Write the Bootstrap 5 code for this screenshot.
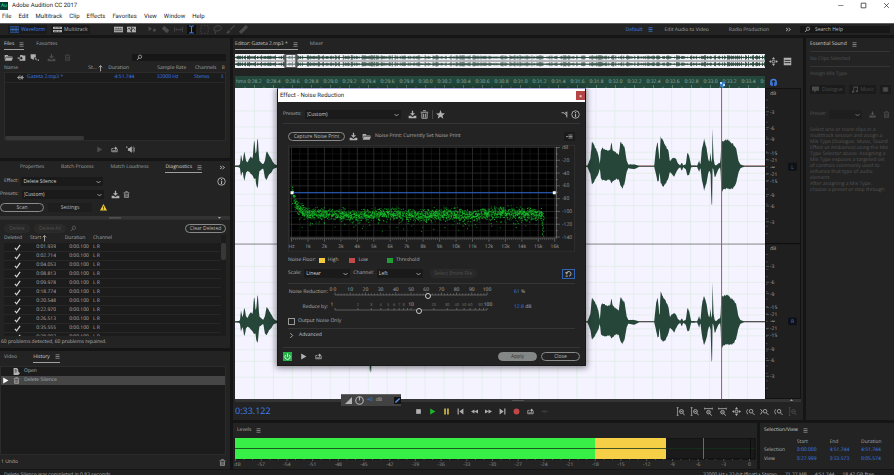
<!DOCTYPE html>
<html lang="en" data-bs-theme="dark">
<head>
<meta charset="utf-8">
<meta name="viewport" content="width=device-width, initial-scale=1">
<title>Adobe Audition CC 2017</title>
<link href="https://cdn.jsdelivr.net/npm/bootstrap@5.3.0/dist/css/bootstrap.min.css" rel="stylesheet">
<style>
:root{--panel:#232323;--gap:#151515;--list:#1c1c1c;--txt:#b2b2b2;--blue:#3a80ee}
html,body{height:100%}
body{background:var(--gap);color:var(--txt);font-family:"Open Sans","Noto Sans",sans-serif;font-size:5px;line-height:7px;text-rendering:geometricPrecision;overflow:hidden}
.app-shell{height:100vh}
svg{display:block;overflow:hidden}
.ic{width:9px;height:9px;flex:none;fill:currentColor}
.ic-s{width:7px;height:7px;flex:none;fill:currentColor}
.g2{gap:2px}.g3{gap:3px}.g5{gap:5px}.g7{gap:7px}
.tool{background:none;border:0;padding:0;color:#b0b0b0;line-height:7px;font-size:5px}
.tool.off{color:#4a4a4a}
.tool.hot{background:#0f0f0f;color:var(--blue)}
.tool.t-play{color:#1fb52f}.tool.t-pause{color:#c9b04a}.tool.t-rec{color:#c04848}
a.tab,a.menu-link{text-decoration:none;color:#a0a0a0;white-space:nowrap}
a.tab{padding-bottom:1px;margin-top:2px;border-bottom:1px solid transparent;line-height:8px}
a.tab.on{color:#d4d4d4;border-bottom:1px solid #a0a0a0}
a.tab.flat{padding:0;margin-top:0;border:0}
.burger{margin-left:5px;color:#9a9a9a;width:5px;height:5px;flex:none}
.blue{color:var(--blue)!important}
.lit{color:#d0d0d0}
.win-bar,.menu-bar,.dlg-title{font-family:Roboto,"Open Sans",sans-serif;font-size:6px}
.win-bar{background:#fff;color:#222;height:11px;line-height:11px}
.menu-bar{background:#fff;height:12px;line-height:12px;gap:7px;padding-left:2px}
a.menu-link{color:#222}
.logo-box{width:8px;height:8px;background:#0a3a31;color:#21e19a;font-size:5px;line-height:8px;text-align:center}
.win-bar button{background:none;border:0;padding:0;color:#333}
.work-bar{background:var(--panel);height:12px;border-top:1px solid #606060;margin-bottom:3px}
.ws-btn{background:#1b1b1b;height:9px;padding:0 2px}
.help-box,.find-box{background:#171717;border:0;color:#bbb;font-size:5px;line-height:7px;padding:0;min-width:0}
.help-wrap{width:90px}
.files-find{width:94px}
.help-box::placeholder{color:#bababa;opacity:1}
.main-row{min-height:0;gap:3px}
.pane{background:var(--panel);min-width:0;min-height:0;overflow:hidden}
.left-col{width:230px;flex:none;gap:3px}
.f-files{flex:121 1 0}.f-diag{flex:188 1 0}.f-hist{flex:119 1 0}
.file-tools{padding:3px 0 2px}
.well{background:var(--list);border:1px solid #2b2b2b;min-height:0;overflow:hidden}
.plain{width:100%;margin:0;border-collapse:collapse;table-layout:fixed;white-space:nowrap}
.plain th{font-weight:400;padding:0;color:#a8a8a8;height:8px;overflow:hidden}
.plain td{padding:0;height:9px;border-bottom:1px solid #272727;overflow:hidden}
.plain.bare td{border-bottom:0}
#diag thead{background:var(--panel)}
select.form-select{width:auto;min-height:0;border:0;border-radius:1px;background-color:#1a1a1a;color:#d0d0d0;font-size:5px;line-height:7px;padding:1px 10px 1px 2px;height:9px;background-size:5px 4px;background-position:right 2px center;
 background-image:url("data:image/svg+xml,%3Csvg xmlns='http://www.w3.org/2000/svg' viewBox='0 0 10 8'%3E%3Cpath d='M1 2l4 4 4-4' fill='none' stroke='%23aaa' stroke-width='1.8'/%3E%3C/svg%3E")}
select.form-select:disabled{background-color:#1c1c1c;opacity:.6}
select.w-a{width:82px}select.w-b{width:96px}select.w-c{width:46px}select.w-d{width:34px}
.pill{border:1px solid #8a8a8a;border-radius:5px;background:none;color:#b8b8b8;height:9px;line-height:7px;padding:0;font-size:5px;white-space:nowrap}
.pill.off{border-color:#2b2b2b;background:#292929;color:#505050}
.pill.flat{border-color:#1e1e1e;background:#1e1e1e;border-radius:1px}
.pill.fill{background:#838786;border-color:#838786;color:#333}
.b-26{width:26px}.b-32{width:32px}.b-39{width:39px}.b-41{width:41px}.b-44{width:44px}.b-47{width:47px}.b-57{width:57px}
.diag-tools{padding:4px 4px 2px}
.diag-note{padding:3px 1px 2px}
.scan-row{padding:4px 0}
.hist-row{height:9px;line-height:9px;gap:4px;padding-left:1px}
.hist-row.on{background:#464646}
.hist-tabs{margin-bottom:3px}
.foot-row{padding:4px 4px 3px 1px}
.editor{padding:0 2px}
.side-36{width:36px;flex:none}
.ov-row{margin-top:4px}
.rul-row{padding-top:8px}
.time-read{font-size:9px;line-height:12px;color:var(--blue)}
.trans{height:18px}
.wave-box{min-width:0;background:#f5f3ff}
.dbcol{width:36px;flex:none;background:#1f1f1f;border:1px solid #121212}
.es-col{width:88px;flex:none}
.es-dim{color:#555}
.es-line{padding:4px 0 3px}
.es-col hr,.dlg hr{margin:0;border-top:1px solid #353535;opacity:1}
.es-col hr.top{margin-top:2px}
.es-text{line-height:6px;white-space:nowrap}
.bottom{height:46px;flex:none;gap:3px}
.sel-pane{width:134px;flex:none}
.status{height:6px;flex:none;background:#1f1f1f;overflow:hidden;line-height:10px;white-space:nowrap;border-top:1px solid var(--gap)}
.dlg{position:absolute;left:277px;top:88px;width:309px;background:var(--panel);box-shadow:0 1px 6px 1px rgba(0,0,0,.45);border:1px solid #191919;border-top:1px solid #b4aee0;z-index:5}
.dlg-title{background:#fff;color:#222;height:13px;line-height:13px;padding-left:2px}
.dlg-x{background:#b44545;color:#fff;border:0;width:9px;height:9px;padding:0;font-size:5px;line-height:8px}
.dlg-body{padding:0 5px}
.inner{padding:0 5px}
.sw{width:6px;height:5px}
.legend-row{padding-top:5px}
.scale-row{padding:5px 0 4px}
.sl-row{padding-top:2px}
.rng{-webkit-appearance:none;appearance:none;background:none;width:100%;height:6px;margin:0;display:block}
.rng::-webkit-slider-thumb{-webkit-appearance:none;width:6px;height:6px;border-radius:50%;border:1px solid #ccc;background:var(--panel)}
.rng-wrap{width:158px;flex:none}
.rng-wrap svg{margin-bottom:-4px;overflow:visible}
.lab-r{width:40px;text-align:right;flex:none;white-space:nowrap}
.tick-row{padding:4px 0 3px}
.adv-row{padding:3px 0 4px}
.act-row{padding:4px 0}
.box-tick{-webkit-appearance:none;appearance:none;width:7px;height:7px;border:1px solid #999;background:none;margin:0}
.undo-btn{border:1px solid #2f63b5;width:13px;height:10px}
.hud{position:absolute;left:341px;top:394px;width:60px;height:12px;background:#424242;border-top:1px solid #666;z-index:6}
svg text{font-family:"Open Sans","Noto Sans",sans-serif}
</style>
<script src="https://cdn.jsdelivr.net/npm/bootstrap@5.3.0/dist/js/bootstrap.bundle.min.js"></script>
</head>
<body>
<svg width="0" height="0" class="position-absolute" aria-hidden="true">
 <symbol id="i-burger" viewBox="0 0 10 10"><path d="M1 1.500h8M1 5h8M1 8.500h8" stroke="currentColor" stroke-width="1.500"/></symbol>
 <symbol id="i-menu" viewBox="0 0 14 10"><path d="M5 2h8M5 5h8M5 8h8" stroke="currentColor" stroke-width="1.500"/><path d="M0 4h4L2 7z"/></symbol>
 <symbol id="i-wave" viewBox="0 0 16 12"><path d="M0 1h16v10H0z" fill="none" stroke="currentColor"/><path d="M0 6h16M3 4v4M5 2v8M7 4v4M9 3v6M11 1v10M13 4v4" stroke="currentColor"/></symbol>
 <symbol id="i-multi" viewBox="0 0 16 12"><path d="M0 1h16v4H0zM0 7h16v4H0z"/><path d="M3 3h3M8 3h5M2 9h5M9 9h3" stroke="#222"/></symbol>
 <symbol id="i-pair" viewBox="0 0 16 12"><path d="M0 1h16v10H0z"/><path d="M2 6V4m2 2V3m2 3V4m2 2V3m2 3V4m2 2V3m2 3V4M1 8h14" stroke="#222"/></symbol>
 <symbol id="i-pair2" viewBox="0 0 16 12"><path d="M0 1h16v10H0z"/><path d="M1 6l3-3 3 6 4-6 4 5M8 1v10" fill="none" stroke="#222" stroke-width="1.200"/></symbol>
 <symbol id="i-move" viewBox="0 0 14 12"><path d="M1 1l5 4-5 4zM10 4l3 3-3 3-3-3z"/></symbol>
 <symbol id="i-razor" viewBox="0 0 12 12"><path d="M4 1l7 6-3 4-7-6zM9 10l2 2"/></symbol>
 <symbol id="i-slip" viewBox="0 0 16 12"><path d="M1 1v10M15 1v10M3 6h10M5 4L3 6l2 2M11 4l2 2-2 2" fill="none" stroke="currentColor" stroke-width="1.3"/></symbol>
 <symbol id="i-ibeam" viewBox="0 0 10 12"><path d="M2 1l3 1 3-1M5 2v8M2 11l3-1 3 1" fill="none" stroke="currentColor" stroke-width="1.4"/></symbol>
 <symbol id="i-marq" viewBox="0 0 12 12"><path d="M1 1h10v10H1z" fill="none" stroke="currentColor" stroke-dasharray="2 2"/></symbol>
 <symbol id="i-lasso" viewBox="0 0 12 12"><path d="M3 8C-1 5 3 1 7 1s6 4 2 6-5 0-6 1 1 2 0 4" fill="none" stroke="currentColor" stroke-width="1.3"/></symbol>
 <symbol id="i-brush" viewBox="0 0 12 12"><path d="M11 0L5 6l1 1 6-6zM4 7c-2 0-2 3-4 4 3 1 6-1 5-3z"/></symbol>
 <symbol id="i-heal" viewBox="0 0 12 12"><path d="M9 1l2 2-8 8-2-2z" stroke="currentColor" stroke-width="1.5"/></symbol>
 <symbol id="i-folder" viewBox="0 0 14 12"><path d="M1 2h5l1 2h6v1H3L1 9zM3 6h11l-2 5H1z"/></symbol>
 <symbol id="i-import" viewBox="0 0 14 12"><path d="M5 2h3l1 1h4v8H4V8h2v2l3-3-3-3v2H1v2h3z"/></symbol>
 <symbol id="i-new" viewBox="0 0 14 12"><path d="M1 1h8v5H6v4L1 7zM7 7h3v4zM12 9h2v2h-2z"/></symbol>
 <symbol id="i-save" viewBox="0 0 14 12"><path d="M6 0h2v4h3L7 8 3 4h3zM1 8h3l3 2 3-2h3v4H1z"/></symbol>
 <symbol id="i-trash" viewBox="0 0 12 12"><path d="M4 1h4M1 3h10M2.500 4v7h7V4M4.800 5v5M7.200 5v5" fill="none" stroke="currentColor" stroke-width="1.2"/></symbol>
 <symbol id="i-find" viewBox="0 0 14 12"><circle cx="8" cy="4.500" r="3.300" fill="none" stroke="currentColor" stroke-width="1.4"/><path d="M5.500 7L2 11" stroke="currentColor" stroke-width="1.6"/></symbol>
 <symbol id="i-up" viewBox="0 0 10 12"><path d="M5 1v10M2 4l3-3 3 3" fill="none" stroke="currentColor" stroke-width="1.6"/></symbol>
 <symbol id="i-clip" viewBox="0 0 14 12"><path d="M0 6h14M3 3v6M6 1v10M9 3v6M11 2v8" stroke="currentColor" stroke-width="1.300"/></symbol>
 <symbol id="i-play" viewBox="0 0 12 12"><path d="M2 1l9 5-9 5z"/></symbol>
 <symbol id="i-loop" viewBox="0 0 14 12"><path d="M4 4H1.500v6.500h11V5M3 8.500h8M5 3.500h5" fill="none" stroke="currentColor" stroke-width="1.500"/><path d="M8 0l5 3.500L8 7z"/></symbol>
 <symbol id="i-speak" viewBox="0 0 14 12"><path d="M0 1l3 1-2 2zM3 4h2l4-3v10L5 8H3z"/><path d="M10.500 3q2 3 0 6M12 1.500q3 4.500 0 9" fill="none" stroke="currentColor"/></symbol>
 <symbol id="i-info" viewBox="0 0 12 12"><circle cx="6" cy="6" r="5" fill="none" stroke="currentColor" stroke-width="1.2"/><path d="M5.300 2.500h1.500V4H5.300zM5.300 5h1.500v4.500H5.300z"/></symbol>
 <symbol id="i-warn" viewBox="0 0 12 12"><path d="M6 0l6 11H0z" fill="#f0cc3a"/><path d="M6 4v4M6 9v1.200" stroke="#222" stroke-width="1.400"/></symbol>
 <symbol id="i-more" viewBox="0 0 14 12"><path d="M2 3l4 3-4 3M7 3l4 3-4 3" fill="none" stroke="currentColor" stroke-width="1.800"/></symbol>
 <symbol id="i-check" viewBox="0 0 12 12"><path d="M1.500 6.500L4.500 10 10.500 1.500" fill="none" stroke="#d8d8d8" stroke-width="2"/></symbol>
 <symbol id="i-doc" viewBox="0 0 12 12"><path d="M1 0h6l2 3v3l3 3-3 3H1z"/><path d="M3 3h3M3 5h4M3 7h3" stroke="#222"/></symbol>
 <symbol id="i-star" viewBox="0 0 12 12"><path d="M6 0l1.600 4.200L12 4.500 8.600 7.200 9.800 11.600 6 9.100 2.200 11.600 3.400 7.200 0 4.500l4.400-.3z"/></symbol>
 <symbol id="i-route" viewBox="0 0 12 12"><path d="M1 3h4l5 5M10 1v10M7 3h3" fill="none" stroke="currentColor" stroke-width="1.700"/></symbol>
 <symbol id="i-undo" viewBox="0 0 12 12"><path d="M1 10.500h4M7 10.500a4 4 0 1 0-4.500-5" fill="none" stroke="currentColor" stroke-width="1.700"/><path d="M0 4h5.500L3 8z"/></symbol>
 <symbol id="i-power" viewBox="0 0 12 12"><path d="M0 0h12v12H0z" fill="#27b14a"/><path d="M3.500 4a3.500 3.500 0 1 0 5 0M6 2v4.500" fill="none" stroke="#d8ffe0" stroke-width="1.200"/></symbol>
 <symbol id="i-stop" viewBox="0 0 12 12"><path d="M2 2h8v8H2z"/></symbol>
 <symbol id="i-pause" viewBox="0 0 12 12"><path d="M2 1h3v10H2zM7 1h3v10H7z"/></symbol>
 <symbol id="i-prev" viewBox="0 0 12 12"><path d="M1 1h2v10H1zM11 1v10L4 6z"/></symbol>
 <symbol id="i-rew" viewBox="0 0 14 12"><path d="M7 2v8L0 6zM14 2v8L7 6z"/></symbol>
 <symbol id="i-rec" viewBox="0 0 12 12"><circle cx="6" cy="6" r="5"/></symbol>
 <symbol id="i-skip" viewBox="0 0 14 12"><path d="M0 6h4M10 6h4" stroke="currentColor"/><path d="M7 2l4 4-4 4zM4 3l3 3-3 3z" opacity=".7"/></symbol>
 <symbol id="i-zamp" viewBox="0 0 14 14"><path d="M1 1h3M2.500 1v12M1 13h3" stroke="currentColor" stroke-width="1.200"/><circle cx="8.500" cy="7" r="3" fill="none" stroke="currentColor" stroke-width="1.400"/><path d="M10.500 9.500l3 3.500M7 7h3" stroke="currentColor" stroke-width="1.400"/></symbol>
 <symbol id="i-ztime" viewBox="0 0 14 14"><path d="M1 1v3M13 1v3M1 2.500h12" stroke="currentColor" stroke-width="1.200"/><circle cx="7" cy="8" r="2.800" fill="none" stroke="currentColor" stroke-width="1.400"/><path d="M9 10l3 3.500M5.500 8h3" stroke="currentColor" stroke-width="1.400"/></symbol>
 <symbol id="i-zfull" viewBox="0 0 14 14"><path d="M7 0l2.500 3.500h-5zM7 14l2.500-3.500h-5zM0 7l3.500-2.500v5zM14 7l-3.500-2.500v5z"/><circle cx="7" cy="7" r="2" fill="none" stroke="currentColor" stroke-width="1.500"/></symbol>
 <symbol id="i-zsel" viewBox="0 0 16 14"><path d="M3 3L1 7l2 5" fill="none" stroke="currentColor" stroke-width="1.400"/><circle cx="9" cy="6.500" r="3.200" fill="none" stroke="currentColor" stroke-width="1.500"/><path d="M11 9l4 4" stroke="currentColor" stroke-width="1.700"/></symbol>
 <symbol id="i-zsel2" viewBox="0 0 16 14"><path d="M1 3l3 4-3 5" fill="none" stroke="currentColor" stroke-width="1.600"/><circle cx="9" cy="6.500" r="3.200" fill="none" stroke="currentColor" stroke-width="1.500"/><path d="M11 9l4 4" stroke="currentColor" stroke-width="1.700"/></symbol>
 <symbol id="i-rack" viewBox="0 0 12 12"><path d="M1 1h10v10H1z"/><path d="M2 4.500h8M2 7.500h8" stroke="#222" stroke-width="1.200"/></symbol>
 <symbol id="i-head" viewBox="0 0 12 12"><path d="M2.500 9.500V5.500a3.500 3.500 0 0 1 7 0v4" fill="none" stroke="#3f7fe6" stroke-width="2"/><path d="M3 5.500h2v5H3zM7 5.500h2v5H7z" fill="#3f7fe6"/></symbol>
 <symbol id="i-bubble" viewBox="0 0 12 12"><path d="M0 1h12v7H7l-3 4V8H0z"/></symbol>
 <symbol id="i-music" viewBox="0 0 12 12"><path d="M4 1h8v8a2 2 0 1 1-1.500-2V3h-5v7a2 2 0 1 1-1.500-2z"/></symbol>
 <symbol id="i-sfx" viewBox="0 0 12 12"><path d="M2 2h8v8H2zM0 3h1v1H0zM0 6h1v1H0zM0 9h1v1H0zM11 3h1v1h-1zM11 6h1v1h-1zM11 9h1v1h-1z"/></symbol>
</svg>

<div class="app-shell d-flex flex-column">
 <header>
  <div class="win-bar d-flex align-items-center">
   <span class="logo-box me-1 ms-0">Au</span><span>Adobe Audition CC 2017</span>
   <div class="ms-auto d-flex gap-3 pe-1">
    <button aria-label="Minimize"><svg class="ic-s" viewBox="0 0 12 12"><path d="M2 6h9" stroke="#333"/></svg></button>
    <button aria-label="Maximize"><svg class="ic-s" viewBox="0 0 12 12"><path d="M2 2h8v8H2z" fill="none" stroke="#333" stroke-width="1.400"/></svg></button>
    <button aria-label="Close"><svg class="ic-s" viewBox="0 0 12 12"><path d="M2 2l8 8M10 2l-8 8" stroke="#333" stroke-width="1.300"/></svg></button>
   </div>
  </div>
  <nav class="menu-bar d-flex">
   <a class="menu-link" href="#">File</a><a class="menu-link" href="#">Edit</a><a class="menu-link" href="#">Multitrack</a><a class="menu-link" href="#">Clip</a><a class="menu-link" href="#">Effects</a><a class="menu-link" href="#">Favorites</a><a class="menu-link" href="#">View</a><a class="menu-link" href="#">Window</a><a class="menu-link" href="#">Help</a>
  </nav>
  <div class="work-bar d-flex align-items-center ps-1">
   <button class="tool ws-btn blue d-flex align-items-center g2 ms-1"><svg class="ic"><use href="#i-wave"/></svg>Waveform</button>
   <button class="tool ws-btn d-flex align-items-center g2 ms-1"><svg class="ic"><use href="#i-multi"/></svg>Multitrack</button>
   <div class="d-flex gap-1 ms-4">
    <button class="tool" aria-label="Show editor"><svg class="ic"><use href="#i-pair"/></svg></button>
    <button class="tool" aria-label="Show spectral view"><svg class="ic"><use href="#i-pair2"/></svg></button>
   </div>
   <div class="d-flex gap-1 ms-2 ps-1">
    <button class="tool off" aria-label="Move"><svg class="ic"><use href="#i-move"/></svg></button>
    <button class="tool off" aria-label="Razor"><svg class="ic"><use href="#i-razor"/></svg></button>
    <button class="tool off" aria-label="Slip"><svg class="ic"><use href="#i-slip"/></svg></button>
    <button class="tool hot" aria-label="Time selection"><svg class="ic"><use href="#i-ibeam"/></svg></button>
    <button class="tool off" aria-label="Marquee"><svg class="ic"><use href="#i-marq"/></svg></button>
    <button class="tool off" aria-label="Lasso"><svg class="ic"><use href="#i-lasso"/></svg></button>
    <button class="tool off" aria-label="Paintbrush"><svg class="ic"><use href="#i-brush"/></svg></button>
    <button class="tool off" aria-label="Spot healing"><svg class="ic"><use href="#i-heal"/></svg></button>
   </div>
   <div class="ms-auto d-flex align-items-center">
    <a class="tab flat blue" href="#">Default</a><svg class="burger blue"><use href="#i-burger"/></svg>
    <a class="tab flat ms-2 ps-1" href="#">Edit Audio to Video</a>
    <a class="tab flat ms-3 ps-1" href="#">Radio Production</a>
    <button class="tool ms-3" aria-label="More workspaces"><svg class="ic-s"><use href="#i-more"/></svg></button>
    <label class="find-box help-wrap d-flex align-items-center gap-1 ms-2 me-1 ps-1"><svg class="ic-s"><use href="#i-find"/></svg><input class="help-box flex-grow-1" placeholder="Search Help" aria-label="Search Help"></label>
   </div>
  </div>
 </header>

 <div class="main-row d-flex flex-grow-1">
  <div class="left-col d-flex flex-column">
   <section class="pane f-files d-flex flex-column px-1">
    <div class="d-flex">
     <a class="tab on d-flex align-items-center" href="#">Files<svg class="burger"><use href="#i-burger"/></svg></a><a class="tab ms-2 ps-1" href="#">Favorites</a>
    </div>
    <div class="file-tools d-flex align-items-center gap-1">
     <button class="tool" aria-label="Open file"><svg class="ic"><use href="#i-folder"/></svg></button>
     <button class="tool" aria-label="Import file"><svg class="ic"><use href="#i-import"/></svg></button>
     <button class="tool" aria-label="New file"><svg class="ic"><use href="#i-new"/></svg></button>
     <button class="tool off ms-1" aria-label="Insert into multitrack"><svg class="ic"><use href="#i-save"/></svg></button>
     <button class="tool off ms-1" aria-label="Delete file"><svg class="ic-s"><use href="#i-trash"/></svg></button>
     <label class="find-box files-find d-flex align-items-center ms-auto px-1"><svg class="ic-s"><use href="#i-find"/></svg><input class="find-box flex-grow-1" aria-label="Filter files"></label>
    </div>
    <table class="plain">
     <colgroup><col style="width:38%"><col style="width:9%"><col style="width:22%"><col style="width:17%"><col style="width:12%"><col></colgroup>
     <thead><tr><th>Name</th><th><span class="d-flex">St... <svg class="ic-s"><use href="#i-up"/></svg></span></th><th>Duration</th><th>Sample Rate</th><th>Channels</th><th>B</th></tr></thead>
    </table>
    <div class="well flex-grow-1 d-flex flex-column">
     <table class="plain">
      <colgroup><col style="width:48%"><col style="width:21%"><col style="width:17%"><col style="width:12%"><col></colgroup>
      <tbody><tr><td><span class="d-flex align-items-center g3 ps-2 ms-1"><svg class="ic-s"><use href="#i-clip"/></svg><span class="blue">Gazeta 2.mp3 *</span></span></td><td class="blue ps-1">4:51.744</td><td class="blue">32000 Hz</td><td class="blue">Stereo</td><td class="blue">3</td></tr></tbody>
     </table>
     <svg class="mt-auto" width="100%" height="4"><rect width="36%" height="4" rx="2" fill="#383838"/></svg>
    </div>
    <div class="d-flex justify-content-center gap-2 py-1">
     <button class="tool off" aria-label="Play file"><svg class="ic-s"><use href="#i-play"/></svg></button>
     <button class="tool" aria-label="Loop file"><svg class="ic-s"><use href="#i-loop"/></svg></button>
     <button class="tool" aria-label="Auto-play"><svg class="ic"><use href="#i-speak"/></svg></button>
    </div>
   </section>

   <section class="pane f-diag d-flex flex-column">
    <div class="d-flex justify-content-between align-items-center ps-3 pe-1">
     <a class="tab ms-1" href="#">Properties</a><a class="tab" href="#">Batch Process</a><a class="tab" href="#">Match Loudness</a><a class="tab on d-flex align-items-center" href="#">Diagnostics<svg class="burger"><use href="#i-burger"/></svg></a><svg class="ic-s"><use href="#i-more"/></svg>
    </div>
    <div class="d-flex align-items-center g3 ps-1 pt-1"><label for="fx">Effect:</label><select id="fx" class="form-select w-a"><option>Delete Silence</option></select><svg class="ic ms-auto me-1"><use href="#i-info"/></svg></div>
    <div class="d-flex align-items-center g3 pt-1"><label for="ps">Presets:</label><select id="ps" class="form-select w-a"><option>(Custom)</option></select><svg class="ic ms-1"><use href="#i-save"/></svg><svg class="ic-s"><use href="#i-trash"/></svg></div>
    <div class="scan-row d-flex align-items-center gap-1"><button class="pill b-44">Scan</button><button class="pill flat b-44">Settings</button><svg class="ic-s ms-1"><use href="#i-warn"/></svg></div>
    <svg width="100%" height="4" viewBox="0 0 228 4" preserveAspectRatio="none"><path d="M0 0h228v4H0z" fill="#333"/><path d="M108 2h12" stroke="#666"/><path d="M216 1h3l-1.500 2z" fill="#aaa"/></svg>
    <div class="diag-tools d-flex align-items-center gap-1"><button class="pill off b-26" disabled>Delete</button><button class="pill off b-32" disabled>Delete All</button><svg class="ic-s opacity-50"><use href="#i-find"/></svg><button class="pill b-41 ms-auto">Clear Deleted</button></div>
    <div class="px-1 d-flex flex-column flex-grow-1 pane">
     <div class="well flex-grow-1 border-0 d-flex">
      <table class="plain" id="diag">
       <colgroup><col style="width:12%"><col style="width:12%"><col style="width:4%"><col style="width:13%"><col></colgroup>
       <thead><tr><th>Deleted</th><th colspan="2"><span class="d-flex">Start<svg class="ic-s"><use href="#i-up"/></svg></span></th><th>Duration</th><th>Channel</th></tr></thead><tbody></tbody>
      </table>
      <svg class="mt-2 flex-shrink-0" width="5" height="17"><rect width="5" height="17" rx="2" fill="#383838"/></svg>
     </div>
    </div>
    <div class="diag-note">60 problems detected, 60 problems repaired.</div>
   </section>

   <section class="pane f-hist d-flex flex-column">
    <div class="hist-tabs d-flex ps-1"><a class="tab" href="#">Video</a><a class="tab on d-flex align-items-center ms-3 px-0" href="#">History<svg class="burger"><use href="#i-burger"/></svg></a></div>
    <div class="well flex-grow-1 me-1">
     <div class="hist-row d-flex align-items-center"><svg class="ic-s invisible"><use href="#i-play"/></svg><svg class="ic-s"><use href="#i-doc"/></svg>Open</div>
     <div class="hist-row on d-flex align-items-center"><svg class="ic-s text-light"><use href="#i-play"/></svg><svg class="ic-s"><use href="#i-trash"/></svg>Delete Silence</div>
    </div>
    <div class="foot-row d-flex"><span>1 Undo</span><svg class="ic-s ms-auto"><use href="#i-trash"/></svg></div>
   </section>
  </div>

  <div class="pane bg-transparent d-flex flex-column flex-grow-1 g3">
   <div class="main-row d-flex flex-grow-1">
    <section class="pane editor flex-grow-1 d-flex flex-column">
     <div class="d-flex"><a class="tab on d-flex align-items-center" href="#">Editor: Gazeta 2.mp3 *<svg class="burger"><use href="#i-burger"/></svg></a><a class="tab ms-2 ps-1" href="#">Mixer</a></div>
     <div class="ov-row d-flex align-items-center">
      <svg id="overview" class="flex-grow-1" height="14" viewBox="0 0 531 14" preserveAspectRatio="none"></svg>
      <div class="side-36 d-flex g5 ps-1"><svg class="ic"><use href="#i-zfull"/></svg><svg class="ic"><use href="#i-rack"/></svg></div>
     </div>
     <div class="rul-row d-flex align-items-center">
      <svg id="ruler" class="flex-grow-1" height="12" viewBox="0 0 531 12" preserveAspectRatio="xMinYMin slice"></svg>
      <div class="side-36 ps-1"><svg class="ic"><use href="#i-head"/></svg></div>
     </div>
     <div class="main-row gap-0 d-flex flex-grow-1">
      <div class="wave-box flex-grow-1"><svg id="wave" width="100%" height="100%" viewBox="0 0 531 312" preserveAspectRatio="none"></svg></div>
      <div class="dbcol"><svg id="dbs" width="34" height="100%" viewBox="0 0 34 312" preserveAspectRatio="none"></svg></div>
     </div>
     <svg class="flex-shrink-0" width="100%" height="3" viewBox="0 0 566 3" preserveAspectRatio="none"><path d="M0 0h566v3H0z" fill="#343434"/><path d="M277 1.500h12" stroke="#555"/><path d="M555 2h3l-1.500-2z" fill="#999"/></svg>
     <div class="trans d-flex align-items-center pe-1">
      <span class="time-read">0:33.122</span>
      <div class="d-flex align-items-center mx-auto ps-3 g7">
       <button class="tool" aria-label="Stop"><svg class="ic-s"><use href="#i-stop"/></svg></button>
       <button class="tool t-play" aria-label="Play"><svg class="ic-s"><use href="#i-play"/></svg></button>
       <button class="tool t-pause" aria-label="Pause"><svg class="ic-s"><use href="#i-pause"/></svg></button>
       <button class="tool" aria-label="Previous"><svg class="ic-s"><use href="#i-prev"/></svg></button>
       <button class="tool" aria-label="Rewind"><svg class="ic-s"><use href="#i-rew"/></svg></button>
       <button class="tool" aria-label="Fast forward"><svg class="ic-s" viewBox="0 0 14 12"><path d="M0 2v8l7-4zM7 2v8l7-4z"/></svg></button>
       <button class="tool" aria-label="Next"><svg class="ic-s" viewBox="0 0 12 12"><path d="M9 1h2v10H9zM1 1v10l7-5z"/></svg></button>
       <button class="tool t-rec" aria-label="Record"><svg class="ic-s"><use href="#i-rec"/></svg></button>
       <button class="tool" aria-label="Loop playback"><svg class="ic-s"><use href="#i-loop"/></svg></button>
       <button class="tool off" aria-label="Skip selection"><svg class="ic-s"><use href="#i-skip"/></svg></button>
      </div>
      <div class="d-flex align-items-center g5">
       <button class="tool" aria-label="Zoom in amplitude"><svg class="ic"><use href="#i-zamp"/></svg></button>
       <button class="tool" aria-label="Zoom out amplitude"><svg class="ic"><use href="#i-zamp"/></svg></button>
       <button class="tool" aria-label="Zoom in time"><svg class="ic"><use href="#i-ztime"/></svg></button>
       <button class="tool" aria-label="Zoom out time"><svg class="ic"><use href="#i-ztime"/></svg></button>
       <button class="tool" aria-label="Zoom out full"><svg class="ic"><use href="#i-zfull"/></svg></button>
       <button class="tool" aria-label="Zoom in at in point"><svg class="ic"><use href="#i-zsel"/></svg></button>
       <button class="tool" aria-label="Zoom in at out point"><svg class="ic"><use href="#i-zsel2"/></svg></button>
       <button class="tool" aria-label="Zoom to selection"><svg class="ic"><use href="#i-zsel"/></svg></button>
       <button class="tool off" aria-label="Zoom reset"><svg class="ic"><use href="#i-zamp"/></svg></button>
      </div>
     </div>
    </section>
    <section class="pane es-col px-1">
     <div class="d-flex"><a class="tab on border-0 d-flex align-items-center" href="#">Essential Sound<svg class="burger"><use href="#i-burger"/></svg></a></div>
     <hr class="top"><div class="es-dim es-line">No Clips Selected</div><hr>
     <div class="es-dim es-line">Assign Mix Type</div>
     <div class="d-flex gap-1 es-dim pt-1"><button class="tool off ws-btn d-flex align-items-center g3"><svg class="ic-s"><use href="#i-bubble"/></svg>Dialogue</button><button class="tool off ws-btn d-flex align-items-center g3"><svg class="ic-s"><use href="#i-music"/></svg>Music</button><button class="tool off ws-btn" aria-label="Sound effects"><svg class="ic-s"><use href="#i-sfx"/></svg></button></div>
     <div class="d-flex align-items-center g3 es-dim pt-3"><label for="mp">Preset:</label><select id="mp" class="form-select w-d" disabled><option></option></select><svg class="ic-s ms-1"><use href="#i-save"/></svg><svg class="ic-s ms-1"><use href="#i-trash"/></svg></div>
     <div class="es-dim es-text pt-2">Select one or more clips in a<br>multitrack session and assign a<br>Mix Type (Dialogue, Music, Sound<br>Effect or Ambience) using the Mix<br>Type Selector above. Assigning a<br>Mix Type exposes a targeted set<br>of controls commonly used to<br>enhance that type of audio<br>element.<br>After assigning a Mix Type,<br>choose a preset or step through</div>
    </section>
   </div>
   <div class="bottom d-flex">
    <section class="pane flex-grow-1 d-flex flex-column">
     <div class="d-flex align-items-center ps-1 pt-1">Levels<svg class="burger"><use href="#i-burger"/></svg></div>
     <svg id="levels" class="mt-1" width="100%" height="30" viewBox="0 0 524 30" preserveAspectRatio="xMinYMin slice"></svg>
    </section>
    <section class="pane sel-pane px-1 d-flex flex-column">
     <div class="lit d-flex align-items-center pt-1">Selection/View<svg class="burger"><use href="#i-burger"/></svg></div>
     <table class="plain bare mt-1"><colgroup><col style="width:26%"><col style="width:26%"><col style="width:25%"><col></colgroup>
      <thead><tr><th></th><th>Start</th><th>End</th><th>Duration</th></tr></thead>
      <tbody><tr><td>Selection</td><td class="blue">0:00.000</td><td class="blue">4:51.744</td><td class="blue">4:51.744</td></tr>
      <tr><td>View</td><td class="blue">0:27.999</td><td class="blue">0:33.573</td><td class="blue">0:05.574</td></tr></tbody></table>
    </section>
   </div>
  </div>
 </div>
 <footer class="status d-flex px-1"><span>Delete Silence was completed in 0.83 seconds</span><span class="ms-auto me-3 d-flex gap-2"><span>32000 Hz • 32-bit (float) • Stereo</span><span>71.27 MB</span><span>4:51.744</span><span>18.42 GB free</span></span></footer>
</div>

<div class="hud d-flex align-items-center g3 ps-1"><svg class="ic-s"><path d="M0 7h7V0z"/></svg><svg class="ic" viewBox="0 0 12 12"><circle cx="6" cy="6" r="5" fill="none" stroke="currentColor" stroke-width="1.500"/><path d="M6 1v5" stroke="currentColor" stroke-width="1.500"/></svg><span class="blue">+0</span><span>dB</span><svg class="ic-s ms-auto" viewBox="0 0 10 10"><path d="M0 0h10v10H0z" fill="#111"/><path d="M2 8l6-6" stroke="#5b94e8" stroke-width="2"/></svg></div>

<div class="dlg" role="dialog" aria-label="Noise Reduction">
 <div class="dlg-title d-flex align-items-center"><span>Effect - Noise Reduction</span><button class="dlg-x ms-auto" aria-label="Close dialog">×</button></div>
 <div class="dlg-body">
  <div class="d-flex align-items-center g3 pt-2 pb-1"><label for="dp">Presets:</label><select id="dp" class="form-select w-b"><option>(Custom)</option></select><svg class="ic ms-1"><use href="#i-save"/></svg><svg class="ic"><use href="#i-trash"/></svg><span class="vr"></span><svg class="ic"><use href="#i-star"/></svg><svg class="ic-s ms-auto"><use href="#i-route"/></svg><svg class="ic"><use href="#i-info"/></svg></div>
  <hr>
  <div class="inner">
   <div class="d-flex align-items-center gap-1 pt-2 pb-1"><button class="pill b-57">Capture Noise Print</button><svg class="ic"><use href="#i-save"/></svg><svg class="ic"><use href="#i-folder"/></svg><span>Noise Print: Currently Set Noise Print</span><button class="tool ws-btn ms-auto" aria-label="Graph menu"><svg class="ic-s"><use href="#i-menu"/></svg></button></div>
   <svg id="graph" width="100%" viewBox="0 0 285 106"></svg>
   <div class="legend-row d-flex align-items-center g3"><span>Noise Floor:</span><svg class="sw"><path d="M0 0h6v5H0z" fill="#f4cb3c"/></svg><span>High</span><svg class="sw ms-2"><path d="M0 0h6v5H0z" fill="#c14b4b"/></svg><span>Low</span><svg class="sw ms-3"><path d="M0 0h6v5H0z" fill="#1f9e35"/></svg><span>Threshold</span></div>
   <div class="scale-row d-flex align-items-center g3"><label for="sc">Scale:</label><select id="sc" class="form-select w-c"><option>Linear</option></select><label for="chn">Channel:</label><select id="chn" class="form-select w-c"><option>Left</option></select><button class="pill off b-47 ms-1" disabled>Select Entire File</button><button class="tool undo-btn ms-auto d-flex justify-content-center align-items-center" aria-label="Reset"><svg class="ic-s"><use href="#i-undo"/></svg></button></div>
   <hr>
   <div class="sl-row d-flex align-items-center"><label class="lab-r" for="nr">Noise Reduction:</label><div class="rng-wrap ms-1"><svg id="t1" width="100%" height="11" viewBox="0 0 158 11"></svg><input id="nr" class="rng" type="range" value="61"></div><span class="ms-4"><span class="blue">61</span> %</span></div>
   <div class="sl-row d-flex align-items-center"><label class="lab-r" for="rb">Reduce by:</label><div class="rng-wrap ms-1"><svg id="t2" width="100%" height="11" viewBox="0 0 158 11"></svg><input id="rb" class="rng" type="range" value="55"></div><span class="ms-4"><span class="blue">12.8</span> dB</span></div>
   <div class="tick-row d-flex align-items-center g3"><input id="ono" class="box-tick" type="checkbox"><label for="ono">Output Noise Only</label></div>
   <hr>
   <div class="adv-row d-flex align-items-center gap-1"><svg class="ic-s" viewBox="0 0 12 12"><path d="M4 2l4 4-4 4" fill="none" stroke="#bbb" stroke-width="1.500"/></svg><span class="lit">Advanced</span></div>
  </div>
  <hr class="mt-1">
  <div class="act-row d-flex align-items-center gap-2"><svg class="ic"><use href="#i-power"/></svg><svg class="ic-s"><use href="#i-play"/></svg><svg class="ic-s"><use href="#i-loop"/></svg><div class="d-flex gap-1 ms-auto"><button class="pill fill b-39">Apply</button><button class="pill b-39">Close</button></div></div>
 </div>
</div>

<script>
let seed=7;const rnd=()=>(seed=(seed*16807)%2147483647)/2147483647;
const put=(id,s)=>document.getElementById(id).innerHTML=s;
const txt=(x,y,s,c='#a0a0a0',a='middle',z=5)=>`<text x="${x}" y="${y}" font-size="${z}" fill="${c}" text-anchor="${a}">${s}</text>`;

// Diagnostics rows
document.querySelector('#diag tbody').innerHTML=['0:01.939','0:02.714','0:04.053','0:08.813','0:09.978','0:18.774','0:20.548','0:22.970','0:26.513','0:35.555','0:38.992'].map(t=>`<tr><td><svg class="ic-s mx-auto"><use href="#i-check"/></svg></td><td class="text-end">${t}</td><td></td><td class="text-end pe-1">0:00.100</td><td>L R</td></tr>`).join('');

// File overview
let s='<path d="M0 0h531v14H0z" fill="#f2f1f7"/>',d='';
for(let x=0;x<531;x+=1){const q=rnd()<.14?.3:1;const h=(.6+rnd()*1.7)*q;d+=`M${x+.5} ${3.5-h}v${2*h}M${x+.5} ${10.2-h}v${2*h}`;}
s+=`<path d="M0 3.500h531M0 10.200h531${d}" stroke="#27463a" stroke-width=".9"/><path d="M0 7h531" stroke="#555" stroke-width=".8"/><path d="M50 0h12v14H50z" fill="#f2f1f7" fill-opacity=".35"/><path d="M50.500 0v14M61.500 0v14" stroke="#555" stroke-width="2"/><path d="M50 .5h12M50 13.500h12" stroke="#555"/>`;
put('overview',s);

// Time ruler
s='<path d="M0 0h531v12H0z" fill="#23473a"/>'+txt(1,7,'hms','#9ab5aa','start');d='';
for(let k=0;k<28;k++){const x=19.5+19*k;if(k<27)s+=txt(x,7,'0:'+(28.2+.2*k).toFixed(1),'#9ab5aa');else s+=txt(x-7,7,'0:','#9ab5aa','start');d+=`M${x} 9v3M${x-9.5} 10.500v1.500`;}
s+=`<path d="${d}" stroke="#6d9080" stroke-width=".7"/><path d="M485 6h5v4l-2.500 2-2.500-2z" fill="#3b7fd0"/><path d="M485 6h2v2h-2zM488 8h2v2h-2z" fill="#bcd8f4"/>`;
put('ruler',s);

// Waveform envelope: x, peak above centre, peak below centre
const E=[[0,.6,.6],[4,1,1],[5,2,2],[6,12,10],[7.7,4,5],[9.3,16,16],[11,6,7],[12.5,4,5],[14.3,8,6],[16,10,8],[17.7,8,10],[19.3,29,13],[20.5,13,12],[21.3,14,20],[22.7,31,23],[24.3,6,5],[26,4,4],[28.3,2,2],[30,6,12],[31.7,16,14],[34,12,9],[36.7,7,6],[38.3,4,3],[40,2,2],[43,1,1],[134.500,.6,.6],[135,20,50],[136.500,20,52],[137,.6,.6],[353,.6,.6],[356,8,8],[357.7,26,19],[359.7,22,16],[362,18,12],[364,12,8],[365.6,2,2],[366.6,17,13],[368,19,14],[371.7,17,15],[375,17,14],[376,18,15],[377.3,26,18],[378.3,17,16],[382,14,13],[384.500,12,14],[386.3,26,20],[388,23,23],[390.3,20,18],[392.3,6,6],[394,2,2],[400,2,3],[405,.5,.5],[420,.5,.5],[421.7,18,8],[423.3,26,16],[424.7,14,16],[425.3,2,4],[426.3,31,17],[429,26,21],[431.7,21,18],[434.3,16,12],[435.7,5,6],[437.7,8,8],[440,9,11],[441.7,8,7],[443.7,3,3],[446,1,1],[447.7,4,5],[449,1,1],[451.7,2,3],[453.3,15,10],[455,11,9],[457,1,1],[463,.6,.6],[465,6,6],[466.3,1,1],[467.7,18,14],[470,28,25],[472.3,20,18],[474,8,8],[475.3,4,4],[476.500,14,8],[477.3,2,41],[478,10,41],[478.500,41,2],[479.3,10,3],[480.7,1,12],[482.3,1,8],[484.3,3,3],[486.3,4,1],[487.3,26,27],[490,27,24],[493.3,28,23],[496.7,25,24],[500,22,22],[502.3,18,17],[504.3,6,7],[506.3,2,2],[510,.5,.5],[531,.5,.5]];
const val=(x,k)=>{for(let i=1;i<E.length;i++)if(E[i][0]>=x){const a=E[i-1],b=E[i],t=(x-a[0])/(b[0]-a[0]);return a[k]+(b[k]-a[k])*t}return .5};
s='';d='';
for(let x=19.5;x<531;x+=19)d+=`M${x} 0v312`;
for(const c of [78.5,234.5])for(const o of [55.5,39.5,28,14,7])d+=`M0 ${c-o}h531M0 ${c+o}h531`;
s+=`<path d="${d}" stroke="#dfeee6" stroke-width=".8"/><path d="M0 156.500h531" stroke="#777" stroke-width=".9"/>`;
for(const c of [78.5,234.5]){let u='',l='';
 for(let x=0;x<=531;x+=.5){const j=.92+.08*rnd();u+=`L${x} ${(c-val(x,1)*j).toFixed(1)}`;l=`L${x} ${(c+val(x,2)*j).toFixed(1)}`+l;}
 s+=`<path d="M0 ${c-.3}h531" stroke="#d04040" stroke-width=".7"/><path d="M${u.slice(1)}${l}z" fill="#27463a"/>`;}
s+='<path d="M487.500 0v312" stroke="#d8433f"/>';
put('wave',s);

// Amplitude scale
s='';d='';
[[0,78.5],[156,234.5]].forEach(([t,c],i)=>{s+=txt(4,t+6,'dB','#aaa','start');
 [[55.5,'-3'],[39.5,'-6'],[28,'-9'],[14,'-15'],[7,'-21']].forEach(([o,n])=>{for(const y of [c-o,c+o]){s+=txt(4,y+2,n,'#aaa','start');d+=`M0 ${y}h3`}});
 s+=txt(4,c+2,'-∞','#aaa','start');
 for(let k=-9;k<10;k++)d+=`M0 ${c+k*7.5}h1.500`;
 s+=`<rect x="22" y="${c-4}" width="9" height="8" rx="1" fill="#0e1116"/>`+txt(26.5,c+2,i?'R':'L','#4a8af0');});
s+=`<path d="${d}" stroke="#777" stroke-width=".6"/><path d="M0 156h34" stroke="#0d0d0d"/>`;
put('dbs',s);

// Level meter
s='<path d="M2 0h520v21H2z" fill="#1a1a1a" stroke="#0c0c0c"/><path d="M2 0h360v21H2z" fill="#38ef48"/><path d="M362 0h71v21h-71z" fill="#f5d046"/><path d="M2 10.500h520" stroke="#12351a" stroke-width=".8"/><path d="M470.500 0v21" stroke="#4f7d4f"/><path d="M517.500 0v21" stroke="#0c0c0c"/>';d='';
for(let k=0;k<=20;k++){const x=2.5+25.7*k;s+=txt(k?x:x+2,28,k?(k==20?'0':String(-60+3*k)):'dB','#959595');d+=`M${x} 21v2M${x+8.6} 21v1M${x+17.1} 21v1`;}
put('levels',s+`<path d="${d}" stroke="#777" stroke-width=".6"/>`);

// Noise print graph
s='<path d="M.5.5h284v105H.5z" fill="#202020" stroke="#2e2e2e"/><path d="M2 2h264v91H2z" fill="#000"/>';d='';let m='';
for(let k=0;k<=32;k++){const x=3.5+8.17*k;if(k%2)m+=`M${x} 2v90`;else d+=`M${x} 2v90`;}
for(let k=0;k<=14;k++){const y=2.5+6.35*k;if(k%2)m+=`M2 ${y}h264`;else d+=`M2 ${y}h264`;}
s+=`<path d="${m}" stroke="#1b1b1b" stroke-width=".6"/><path d="${d}" stroke="#383838" stroke-width=".7"/>`;
let g1='',g2='';
for(let i=0;i<2700;i++){const x=4+rnd()*248;let y=69.5-(x>190?1.500:0)-22*Math.exp(-(x-4)/4)+Math.sin(x/9)*.7-(x<45?(45-x)*.07:0);
 const n=(rnd()+rnd()+rnd()-1.500)*5.5+(rnd()<.06?rnd()*12:0);(rnd()<.4?g1+=`M${x.toFixed(1)} ${(y+n).toFixed(1)}h1`:g2+=`M${x.toFixed(1)} ${(y+n).toFixed(1)}h1`);}
for(let y=68;y<92;y+=1.500)g1+=`M${252+rnd()*2} ${y}h1`;
s+=`<path d="${g2}" stroke="#0b7a18"/><path d="${g1}" stroke="#1ecb30" stroke-width=".8"/><path d="M3.500 47.500h261" stroke="#2f69d4"/><path d="M2.500 46h3v3h-3zM263 46h3v3h-3z" fill="#fff"/><path d="M266.500 2v91M2 92.500h264" stroke="#777" stroke-width=".8"/>`;
d='';for(let k=0;k<=14;k++)d+=`M266 ${2.5+6.35*k}h${k%2?2:4}`;
for(let k=0;k<=128;k++)d+=`M${3.5+2.042*k} 93v${k%8?1:3}`;
s+=`<path d="${d}" stroke="#888" stroke-width=".6"/>`;
['dB','-20','-40','-60','-80','-100','-120','-140'].forEach((t,k)=>s+=txt(272,4+12.7*k,t,'#9a9a9a','start'));
for(let k=0;k<=16;k++)s+=txt(3.5+16.34*k,102,k?k+'k':'Hz');
put('graph',s);

// Slider scales
s=txt(-1,5,'0','#aaa');d='M3 9h152';for(let k=0;k<=10;k++)s+=txt(3+15.2*k,5,k*10,'#aaa');
for(let k=0;k<=50;k++)d+=`M${3+3.04*k} ${k%5?7.500:6.500}V9`;
put('t1',s+`<path d="${d}" stroke="#777" stroke-width=".7" fill="none"/>`);
s='';d='M3 9h152';for(const n of [1,2,3,4,5,6,7,8,9,10,20,30,40,50,60,70,80,90,100]){const x=3+76*Math.log10(n),main=[1,10,100].includes(n);if(![9,70,80].includes(n))s+=txt(n==1?x-3:n==90?x-3:n==100?x+1:x,5,n,main?'#b4b4b4':'#747474','middle',main?5:4);d+=`M${x} 7v2`;}
put('t2',s+`<path d="${d}" stroke="#777" stroke-width=".7" fill="none"/>`);
</script>
</body>
</html>
